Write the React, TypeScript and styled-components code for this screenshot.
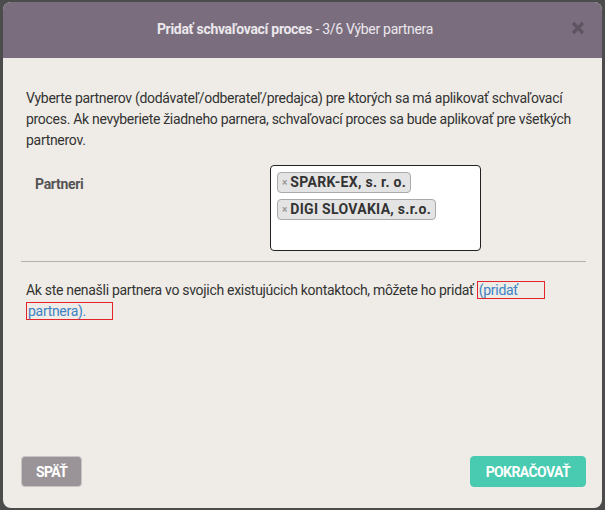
import React from 'react';
import styled, { createGlobalStyle } from 'styled-components';

const GlobalStyle = createGlobalStyle`
    html, body {
        margin: 0;
        padding: 0;
        background: #4c4c4c;
    }
    body {
        font-family: Roboto, "Liberation Sans", sans-serif;
        font-size: 14px;
        color: #333;
    }
`;

const Modal = styled.div`
    margin: 2px 3px 0 3px;
    height: 506px;
    background: #efece7;
    border-radius: 8px;
    overflow: hidden;
    display: flex;
    flex-direction: column;
`;

const Header = styled.div`
    height: 54px;
    background: #7a6e7e;
    display: flex;
    align-items: center;
    justify-content: center;
    position: relative;
    padding: 0 15px 2px 0;
`;

const Title = styled.h3`
    margin: 0;
    font-size: 14px;
    font-weight: normal;
    color: #ebe7ec;
    letter-spacing: -0.3px;
    b {
        font-weight: bold;
    }
`;

const CloseButton = styled.button`
    position: absolute;
    right: 16px;
    top: 18px;
    border: none;
    background: none;
    padding: 0;
    width: 16px;
    height: 16px;
    cursor: pointer;
`;

const Body = styled.div`
    flex: 1;
    padding: 30px 21px 0 23px;
    line-height: 21px;
    letter-spacing: -0.3px;
`;

const Intro = styled.p`
    margin: 0;
`;

const FormRow = styled.div`
    display: grid;
    grid-template-columns: 235px 211px;
    margin: 14px 0 0 9px;
`;

const Label = styled.label`
    font-weight: bold;
    color: #555;
    padding-top: 9px;
`;

const SelectBox = styled.div`
    height: 86px;
    box-sizing: border-box;
    background: #fff;
    border: 1px solid #222;
    border-radius: 4px;
    padding: 6px 6px 0 6px;
    display: flex;
    flex-direction: column;
    align-items: flex-start;
    gap: 6px;
`;

const Tag = styled.span`
    display: inline-flex;
    align-items: center;
    height: 21px;
    box-sizing: border-box;
    padding: 0 4px 0 4px;
    background: #e4e4e4;
    border: 1px solid #aaa;
    border-radius: 4px;
    font-weight: bold;
    color: #333;
    letter-spacing: 0.3px;
`;

const TagRemove = styled.span`
    color: #999;
    font-size: 10px;
    margin-right: 3px;
    letter-spacing: 0;
`;

const Divider = styled.hr`
    border: none;
    border-top: 1px solid #b3b0ad;
    margin: 10px -5px 0 -5px;
`;

const Note = styled.p`
    margin: 18px 0 0 0;
`;

const AddLink = styled.a`
    color: #3d82c4;
    text-decoration: none;
    border: 1px solid #e3242b;
    padding: 0 26px 0 1px;
    box-decoration-break: clone;
    -webkit-box-decoration-break: clone;
    cursor: pointer;
`;

const Footer = styled.div`
    display: flex;
    justify-content: space-between;
    align-items: center;
    padding: 0 16px 21px 18px;
`;

const Button = styled.button<{ $variant: 'back' | 'next' }>`
    height: 31px;
    padding: 0 ${p => (p.$variant === 'back' ? '14px' : '15px')};
    border-radius: 4px;
    border: 1px solid ${p => (p.$variant === 'back' ? '#c9c5c7' : '#48cbb0')};
    background: ${p => (p.$variant === 'back' ? '#9a9499' : '#48cbb0')};
    color: #fff;
    font-family: Roboto, "Liberation Sans", sans-serif;
    font-weight: bold;
    font-size: 14px;
    letter-spacing: -0.6px;
    text-transform: uppercase;
    cursor: pointer;
`;

const App: React.FC = () => {
    return (
        <>
            <GlobalStyle />
            <Modal>
                <Header>
                    <Title>
                        <b>Pridať schvaľovací proces</b> - 3/6 Výber partnera
                    </Title>
                    <CloseButton aria-label="close">
                        <svg width="16" height="16" viewBox="0 0 16 16">
                            <path d="M3 3 L13 13 M13 3 L3 13" stroke="#5e5462" strokeWidth="3.2" strokeLinecap="butt" />
                        </svg>
                    </CloseButton>
                </Header>
                <Body>
                    <Intro>
                        Vyberte partnerov (dodávateľ/odberateľ/predajca) pre ktorých sa má aplikovať schvaľovací
                        proces. Ak nevyberiete žiadneho parnera, schvaľovací proces sa bude aplikovať pre všetkých
                        partnerov.
                    </Intro>
                    <FormRow>
                        <Label>Partneri</Label>
                        <SelectBox>
                            <Tag><TagRemove>×</TagRemove>SPARK-EX, s. r. o.</Tag>
                            <Tag><TagRemove>×</TagRemove>DIGI SLOVAKIA, s.r.o.</Tag>
                        </SelectBox>
                    </FormRow>
                    <Divider />
                    <Note>
                        Ak ste nenašli partnera vo svojich existujúcich kontaktoch, môžete ho pridať{' '}
                        <AddLink>(pridať partnera).</AddLink>
                    </Note>
                </Body>
                <Footer>
                    <Button $variant="back">Späť</Button>
                    <Button $variant="next">Pokračovať</Button>
                </Footer>
            </Modal>
        </>
    );
};

export default App;
